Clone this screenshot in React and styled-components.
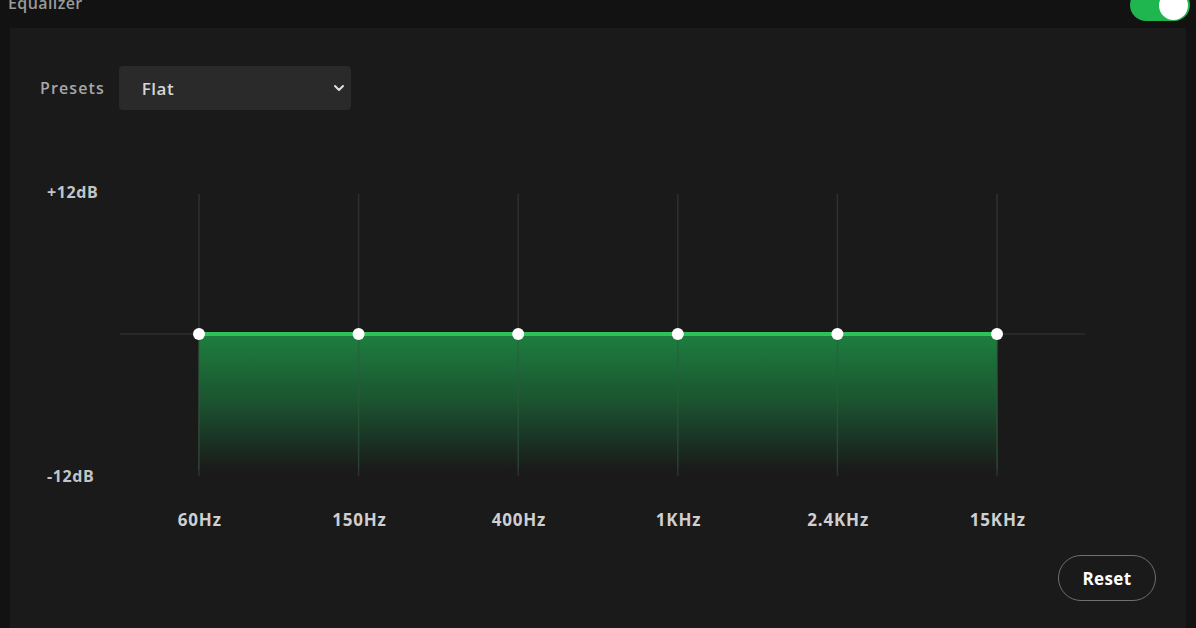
import React from "react";
import styled, { createGlobalStyle } from "styled-components";

const Global = createGlobalStyle`
  html, body {
    margin: 0;
    padding: 0;
    background: #121212;
    overflow: hidden;
  }
  body {
    font-family: "Open Sans", "Liberation Sans", sans-serif;
    color: #fff;
  }
`;

const bands = ["60Hz", "150Hz", "400Hz", "1KHz", "2.4KHz", "15KHz"];
const gains = [0, 0, 0, 0, 0, 0];

const Page = styled.div`
  width: 1196px;
  height: 628px;
  display: flex;
  flex-direction: column;
  background: #121212;
  overflow: hidden;
`;

const TopBar = styled.div`
  height: 28px;
  flex-shrink: 0;
  display: flex;
  justify-content: space-between;
  align-items: flex-start;
  padding: 0 6px 0 8px;
`;

const Title = styled.div`
  margin-top: -8px;
  font-size: 16px;
  font-weight: 600;
  letter-spacing: 0.4px;
  color: #9a9a9a;
`;

const Toggle = styled.div`
  margin-top: -11px;
  width: 60px;
  height: 32px;
  border-radius: 16px;
  background: #1fb64f;
  display: flex;
  justify-content: flex-end;
  align-items: center;
  padding: 0 2px;
  box-sizing: border-box;
`;

const Knob = styled.div`
  width: 29px;
  height: 29px;
  border-radius: 50%;
  background: #fff;
`;

const Panel = styled.div`
  flex: 1;
  margin: 0 10px 0 10px;
  background: #1a1a1a;
  display: flex;
  flex-direction: column;
  padding: 38px 30px 0 30px;
`;

const PresetRow = styled.div`
  display: flex;
  align-items: center;
  gap: 14px;
`;

const Label = styled.span`
  font-size: 16px;
  font-weight: 600;
  letter-spacing: 1.1px;
  color: #a7a7a7;
`;

const Select = styled.div`
  width: 232px;
  height: 44px;
  box-sizing: border-box;
  background: #2a2a2a;
  border-radius: 4px;
  display: flex;
  align-items: center;
  justify-content: space-between;
  padding: 0 4px 0 23px;
  font-size: 17px;
  font-weight: 600;
  letter-spacing: 0.5px;
  color: #d6d6d6;
`;

const ChartWrap = styled.div`
  display: flex;
  margin-top: 84px;
`;

const Axis = styled.div`
  width: 80px;
  height: 306px;
  display: flex;
  flex-direction: column;
  justify-content: space-between;
  margin-top: -13px;
`;

const AxisLabel = styled.span`
  font-size: 16px;
  font-weight: 700;
  letter-spacing: 0.6px;
  color: #c4c4c4;
  padding-left: 7px;
`;

const Plot = styled.div`
  display: flex;
  flex-direction: column;
`;

const Freqs = styled.div`
  display: flex;
  margin-top: 32px;
`;

const Freq = styled.span`
  width: 159.6px;
  text-align: center;
  font-size: 17px;
  font-weight: 700;
  letter-spacing: 0.8px;
  color: #cfcfcf;
`;

const Footer = styled.div`
  display: flex;
  justify-content: flex-end;
  margin-top: 24px;
`;

const ResetButton = styled.button`
  width: 98px;
  height: 46px;
  border-radius: 23px;
  background: transparent;
  border: 1.5px solid #6f6f6f;
  color: #fff;
  font-family: inherit;
  font-size: 17px;
  font-weight: 700;
  letter-spacing: 0.4px;
`;

const Chevron = () => (
  <svg width="16" height="16" viewBox="0 0 16 16">
    <path d="M4 6l4 4 4-4" fill="none" stroke="#e0e0e0" strokeWidth="2" strokeLinecap="round" strokeLinejoin="round" />
  </svg>
);

// EQ graph: grid, area under the curve, curve and band handles
const Graph = () => {
  const w = 965;
  const top = 0;
  const bottom = 282;
  const mid = 140;
  const x0 = 79;
  const step = 159.6;
  const xs = bands.map((_, i) => x0 + i * step);
  const ys = gains.map((g) => mid - (g / 12) * (mid - top));
  const line = xs.map((x, i) => `${i ? "L" : "M"}${x},${ys[i]}`).join(" ");
  const area = `${line} L${xs[xs.length - 1]},${bottom - 6} L${xs[0]},${bottom - 6} Z`;
  return (
    <svg width={w} height={bottom} viewBox={`0 0 ${w} ${bottom}`} style={{ display: "block" }}>
      <defs>
        <linearGradient id="eqFill" x1="0" y1="0" x2="0" y2="1">
          <stop offset="0" stopColor="#1d7f3f" />
          <stop offset="0.5" stopColor="#1b5330" />
          <stop offset="1" stopColor="#1a1a1a" />
        </linearGradient>
      </defs>
      <line x1="0" y1={mid} x2={w} y2={mid} stroke="#2e2e2e" strokeWidth="1.5" />
      {xs.map((x) => (
        <line key={x} x1={x} y1={top} x2={x} y2={bottom} stroke="#303030" strokeWidth="1.5" />
      ))}
      <path d={area} fill="url(#eqFill)" />
      {xs.map((x) => (
        <line key={"v" + x} x1={x} y1={mid} x2={x} y2={bottom - 6} stroke="#2f5a3b" strokeWidth="1.5" opacity="0.6" />
      ))}
      <path d={line} fill="none" stroke="#2dc35b" strokeWidth="4" />
      {xs.map((x, i) => (
        <circle key={"d" + x} cx={x} cy={ys[i]} r="6" fill="#fff" />
      ))}
    </svg>
  );
};

export default function App() {
  return (
    <Page>
      <Global />
      <TopBar>
        <Title>Equalizer</Title>
        <Toggle>
          <Knob />
        </Toggle>
      </TopBar>
      <Panel>
        <PresetRow>
          <Label>Presets</Label>
          <Select>
            Flat
            <Chevron />
          </Select>
        </PresetRow>
        <ChartWrap>
          <Axis>
            <AxisLabel>+12dB</AxisLabel>
            <AxisLabel>-12dB</AxisLabel>
          </Axis>
          <Plot>
            <Graph />
            <Freqs>
              {bands.map((b) => (
                <Freq key={b}>{b}</Freq>
              ))}
            </Freqs>
          </Plot>
        </ChartWrap>
        <Footer>
          <ResetButton>Reset</ResetButton>
        </Footer>
      </Panel>
    </Page>
  );
}
